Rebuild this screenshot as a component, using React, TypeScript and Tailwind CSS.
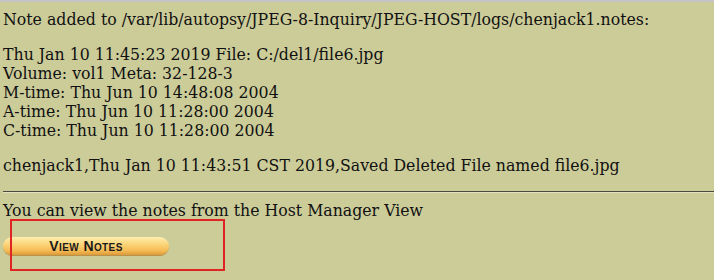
export default function App() {
  return (
    <div className="relative min-h-[280px] w-[714px] overflow-hidden border-t-2 border-[#c4c4c4] bg-[#cccc99] pl-[3px] pt-[8px] font-['DejaVu_Serif',serif] text-[15.75px] leading-[19px] text-[#111]">
      <p>Note added to /var/lib/autopsy/JPEG-8-Inquiry/JPEG-HOST/logs/chenjack1.notes:</p>
      <p className="mt-[16px]">
        Thu Jan 10 11:45:23 2019 File: C:/del1/file6.jpg
        <br />
        Volume: vol1 Meta: 32-128-3
        <br />
        M-time: Thu Jun 10 14:48:08 2004
        <br />
        A-time: Thu Jun 10 11:28:00 2004
        <br />
        C-time: Thu Jun 10 11:28:00 2004
      </p>
      <p className="mt-[16px]">chenjack1,Thu Jan 10 11:43:51 CST 2019,Saved Deleted File named file6.jpg</p>
      <hr className="mt-[16px] border-t border-b border-t-[#4a4a40] border-b-[#e2e2c0]" />
      <p className="mt-[8px]">You can view the notes from the Host Manager View</p>
      <div className="mt-[17px]">
        <button className="flex h-[18px] w-[166px] items-center justify-center rounded-full bg-[linear-gradient(to_bottom,#fdeeb0_0%,#fbd47a_40%,#f5bc55_75%,#dc9a3a_100%)] pb-px font-['Liberation_Sans',sans-serif] text-[14px] font-bold leading-none tracking-[0.4px] text-[#1a1a1a] [font-variant:small-caps] shadow-[0_1px_0_#b8924a]">
          View Notes
        </button>
      </div>
      <div className="absolute left-[10px] top-[217px] h-[52px] w-[215px] border-2 border-[#e02424]" />
    </div>
  );
}
